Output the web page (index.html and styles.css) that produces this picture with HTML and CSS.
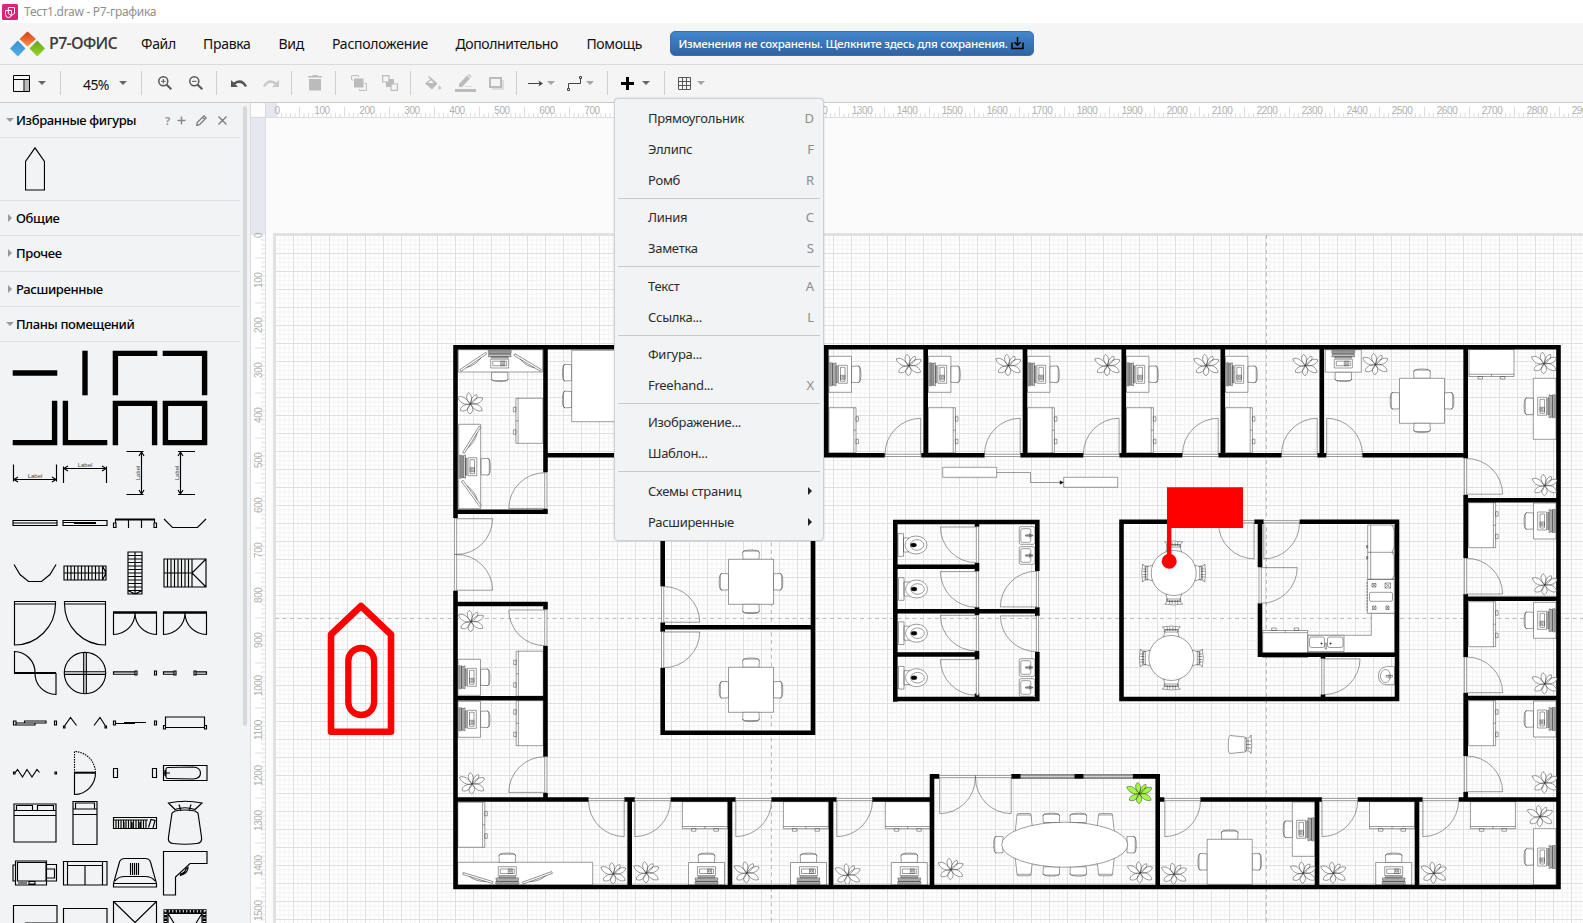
FILE: index.html
```html
<!DOCTYPE html>
<html lang="ru">
<head>
<meta charset="utf-8">
<title>Тест1.draw - Р7-графика</title>
<link rel="stylesheet" href="styles.css">
</head>
<body>
<div class="app">
  <header class="titlebar">
    <svg class="app-icon" width="16" height="16" viewBox="0 0 16 16"><rect width="16" height="16" rx="1.5" fill="#dc2279"/><path d="M6.3 3.5H12.500V9.500L9.500 11.500L6.300 9.500ZM3.500 6.500H9.500V10.500A3 3 0 0 1 3.500 10.500Z" fill="none" stroke="#fff"/></svg>
    <span class="title">Тест1.draw - Р7-графика</span>
  </header>
  <nav class="menubar">
    <svg class="logo" width="35" height="26" viewBox="0 0 35 26">
      <defs>
        <linearGradient id="lr" x2="0" y2="1"><stop stop-color="#d3400f"/><stop offset="1" stop-color="#ff8e4a"/></linearGradient>
        <linearGradient id="lb" x2="0" y2="1"><stop stop-color="#3a8fd0"/><stop offset="1" stop-color="#4fb0e6"/></linearGradient>
        <linearGradient id="lg" x2="0" y2="1"><stop stop-color="#6aa51c"/><stop offset="1" stop-color="#96d62c"/></linearGradient>
      </defs>
      <path d="M17.500.5L26 8L17.500 15.500L9.500 8Z" fill="url(#lr)"/><path d="M7.800 9.500L15.500 17.500L7.800 25.500L0 17.500Z" fill="url(#lb)"/><path d="M27.300 9.500L35 17.500L27.300 25.500L19.500 17.500Z" fill="url(#lg)"/>
    </svg>
    <span class="brand">Р7-ОФИС</span>
    <span class="mi m1">Файл</span><span class="mi m2">Правка</span><span class="mi m3">Вид</span><span class="mi m4">Расположение</span><span class="mi m5">Дополнительно</span><span class="mi m6">Помощь</span>
    <button class="save"><span>Изменения не сохранены. Щелкните здесь для сохранения.</span>
      <svg width="13" height="13" viewBox="0 0 13 13"><path d="M1 5.500V11.500H12V5.500M6.500 0V8M3.500 5.300L6.500 8.300L9.500 5.300" fill="none" stroke="#000" stroke-width="1.500"/></svg></button>
  </nav>
  <div class="toolbar">
    <div class="grp g1"><svg width="17" height="17" viewBox="0 0 17 17"><path d="M11.500 4.500H16V16H11.500Z" fill="#bbb"/><path d="M.5.500H16.500V16.500H.5ZM.5 4.500H16.500M11 4.500V16.500" fill="none" stroke="#000"/></svg><i class="caret"></i></div>
    <div class="grp g2"><span class="zoom">45%</span><i class="caret"></i></div>
    <div class="grp g3"><svg width="14" height="14" viewBox="0 0 14 14"><g fill="none" stroke="#555"><circle cx="5.300" cy="5.300" r="4.500" stroke-width="1.500"/><path d="M8.700 8.700L13.300 13.300" stroke-width="2"/><path d="M5.300 3V7.600M3 5.300H7.600"/></g></svg><svg width="14" height="14" viewBox="0 0 14 14"><g fill="none" stroke="#555"><circle cx="5.300" cy="5.300" r="4.500" stroke-width="1.500"/><path d="M8.700 8.700L13.300 13.300" stroke-width="2"/><path d="M3 5.300H7.600"/></g></svg></div>
    <div class="grp g4"><svg width="16" height="9" viewBox="0 0 16 9"><path d="M0 1V8H7L4.300 5.300Q10 1.500 14 8L16 7Q11-2.500 2.700 3.500Z" fill="#555"/></svg><svg width="16" height="9" viewBox="0 0 16 9"><path d="M16 1V8H9L11.700 5.300Q6 1.500 2 8L0 7Q5-2.500 13.300 3.500Z" fill="#c8c8c8"/></svg></div>
    <div class="grp g5"><svg width="14" height="16" viewBox="0 0 14 16"><path d="M0 1H4.500V0H9.500V1H14V2.500H0ZM1 4H13V15.500H1Z" fill="#bbb"/></svg></div>
    <div class="grp g6"><svg width="16" height="16" viewBox="0 0 16 16"><path d="M3 3.500H12.500V12.500H3Z" fill="#bbb"/><path d="M.6 5V.6H7.500V2M15.400 8.500V15.400H8.500V14M.6 5H2M13.500 8.500H15.400" fill="none" stroke="#bbb"/></svg><svg width="16" height="16" viewBox="0 0 16 16"><path d="M4 4H12V12H4Z" fill="#bbb"/><path d="M.6.600H7V7H.6ZM9 9H15.400V15.400H9Z" fill="#f5f5f5" stroke="#bbb" stroke-width="1.200"/></svg></div>
    <div class="grp g7"><svg width="17" height="15" viewBox="0 0 17 15"><path d="M4 0L12.500 7.500L7 13.500L0 7.500L5.500 3L3 1Z" fill="#bbb"/><path d="M3 7H9L6 4.300Z" fill="#f5f5f5"/><path d="M14.500 9Q18 13.500 14.500 13.500T14.500 9" fill="#ccc"/></svg><svg width="21" height="18" viewBox="0 0 21 18"><path d="M4 13V10L12 1.500L15 4.500L7 13ZM12.800.7L14 0L16.500 2.500L15.800 3.500Z" fill="#bbb"/><path d="M0 15H21V18H0Z" fill="#bbb"/><path d="M10 12.500H17" stroke="#ddd"/></svg><svg width="15" height="13" viewBox="0 0 15 13"><path d="M3 3H15V13H3Z" fill="#ddd"/><path d="M1 1H12V10H1Z" fill="#f5f5f5" stroke="#bbb" stroke-width="2"/></svg></div>
    <div class="grp g8"><svg width="15" height="7" viewBox="0 0 15 7"><path d="M0 3.500H12" stroke="#444"/><path d="M10.500 0.500L15 3.500L10.500 6.500L11.500 3.500Z" fill="#444"/></svg><i class="caret light"></i><svg class="conn" width="15" height="15" viewBox="0 0 15 15"><path d="M1.500 12V7.500H13.500V3M.5 12.500H2.500V14.500H.5ZM12.500.5H14.500V2.500H12.500Z" fill="none" stroke="#444"/></svg><i class="caret light"></i></div>
    <div class="grp g9"><svg width="13" height="13" viewBox="0 0 13 13"><path d="M6.500 0V13M0 6.500H13" stroke="#000" stroke-width="3"/></svg><i class="caret"></i></div>
    <div class="grp g10"><svg width="13" height="13" viewBox="0 0 13 13"><path d="M.5.500H12.500V12.500H.5ZM.5 4.500H12.500M.5 8.500H12.500M4.500.5V12.500M8.500.5V12.500" fill="none" stroke="#555"/></svg><i class="caret light"></i></div>
  </div>
  <main class="work">
    <aside class="sidebar">
      <h3 class="head fav"><i class="tri down"></i>Избранные фигуры
        <span class="acts"><b>?</b>
        <svg width="9" height="9" viewBox="0 0 9 9"><path d="M4.500.5V8.500M.5 4.500H8.500" stroke="#888" stroke-width="1.400"/></svg>
        <svg width="11" height="11" viewBox="0 0 11 11"><path d="M.6 10.400L1.300 7.500L8 .8L10.200 3L3.500 9.700ZM6.500 2.300L8.700 4.500" fill="none" stroke="#777" stroke-width="1.200"/></svg>
        <svg width="9" height="9" viewBox="0 0 9 9"><path d="M.5.500L8.500 8.500M8.500.5L.5 8.500" stroke="#777" stroke-width="1.200"/></svg></span>
      </h3>
      <div class="favbody"><svg width="20" height="44" viewBox="0 0 20 44"><path d="M.5 43V14.500L10 .8L19.500 14.500V43Z" fill="none" stroke="#000" stroke-width="1.200"/></svg></div>
      <h3 class="head"><i class="tri"></i>Общие</h3>
      <h3 class="head h36"><i class="tri"></i>Прочее</h3>
      <h3 class="head"><i class="tri"></i>Расширенные</h3>
      <h3 class="head"><i class="tri down"></i>Планы помещений</h3>
      <div class="tiles">
        <svg class="w" viewBox="-25 -25 50 50"><path d="M-22.300 0H22.300"/></svg>
        <svg class="w" viewBox="-25 -25 50 50"><path d="M0-22.300V22.300"/></svg>
        <svg class="w" viewBox="-25 -25 50 50"><path d="M-19.600 22.300V-19.600H22.300"/></svg>
        <svg class="w" viewBox="-25 -25 50 50"><path d="M-22.300-19.600H19.600V22.300"/></svg>

        <svg class="w" viewBox="-25 -25 50 50"><path d="M19.600-22.300V19.600H-22.300"/></svg>
        <svg class="w" viewBox="-25 -25 50 50"><path d="M-19.600-22.300V19.600H22.300"/></svg>
        <svg class="w" viewBox="-25 -25 50 50"><path d="M-19.600 22.300V-19.600H19.600V22.300"/></svg>
        <svg class="w" viewBox="-25 -25 50 50"><path d="M-19.600 19.600V-19.600H19.600V19.600Z"/></svg>

        <svg viewBox="-25 -25 50 50"><path d="M-21.500-8.500V8.500M21.500-8.500V8.500M-21 6.500H21M-17 4L-21 6.500L-17 9M17 4L21 6.500L17 9"/><text x="0" y="5">Label</text></svg>
        <svg viewBox="-25 -25 50 50"><path d="M-21.500-6.500V10M21.500-6.500V10M-21-4.500H21M-17-7L-21-4.500L-17-2M17-7L21-4.500L17-2"/><text x="0" y="-6">Label</text></svg>
        <svg viewBox="-25 -25 50 50"><path d="M-8.500-21.500H8.500M-8.500 21.500H8.500M6.500-21V21M4-17L6.500-21L9-17M4 17L6.500 21L9 17"/><text transform="translate(5.300 0) rotate(-90)">Label</text></svg>
        <svg viewBox="-25 -25 50 50"><path d="M-7-21.500H10M-7 21.500H10M-4.500-21V21M-7-17L-4.500-21L-2-17M-7 17L-4.500 21L-2 17"/><text transform="translate(-6 0) rotate(-90)">Label</text></svg>

        <svg viewBox="-25 -25 50 50"><path d="M-22-2.500H22V2.500H-22ZM-22 0H22"/></svg>
        <svg viewBox="-25 -25 50 50"><path d="M-22-2.500H22V2.500H-22ZM-22-.5H11M-11 .5H11"/></svg>
        <svg viewBox="-25 -25 50 50"><path d="M-21.500 4.500V0H-19V4.500ZM21.500 4.500V0H19V4.500ZM-19.500 0V-3.500H19.500V0M-6.500-3.500V5M6.500-3.500V5"/><path d="M-20-3.500H20" stroke-width="2"/></svg>
        <svg viewBox="-25 -25 50 50"><path d="M-21-4L-12.500 4.500H12.500L21-4"/></svg>

        <svg viewBox="-25 -25 50 50"><path d="M-21-8.500L-15 1.500L-6.500 8.500H6.500L15 1.500L21-8.500"/></svg>
        <svg viewBox="-25 -25 50 50"><path d="M-21-7H21V7H-21ZM-21 0H21M-17.500-7V7M-14-7V7M-10.500-7V7M-7-7V7M-3.500-7V7M0-7V7M3.500-7V7M7-7V7M10.500-7V7M14-7V7M17.500-7V7M17.500-7L21 0L17.500 7"/></svg>
        <svg viewBox="-25 -25 50 50"><g transform="rotate(90)"><path d="M-21-7H21V7H-21ZM-21 0H21M-17.500-7V7M-14-7V7M-10.500-7V7M-7-7V7M-3.500-7V7M0-7V7M3.500-7V7M7-7V7M10.500-7V7M14-7V7M17.500-7V7M17.500-7L21 0L17.500 7"/></g></svg>
        <svg viewBox="-25 -25 50 50"><path d="M-21-14H21V14H-21ZM-21 0H7M-17.500-14V14M-14-14V14M-10.500-14V14M-7-14V14M-3.500-14V14M0-14V14M3.500-14V14M7-14V14M21-14L7 0L21 14"/></svg>

        <svg viewBox="-25 -25 50 50"><path d="M-20.500-21.500H20.500V-19H-20.500ZM-20.500-19V22A41 41 0 0 0 20.500-19"/></svg>
        <svg viewBox="-25 -25 50 50"><path d="M20.500-21.500H-20.500V-19H20.500ZM20.500-19V22A41 41 0 0 1-20.500-19"/></svg>
        <svg viewBox="-25 -25 50 50"><path d="M-21.500-11V11.500A21.500 21.500 0 0 0 0-10A21.500 21.500 0 0 0 21.500 11.500V-11"/><path d="M-22-10.500H22" stroke-width="2.500"/></svg>
        <svg viewBox="-25 -25 50 50"><path d="M-21.500-11V11.500A21.500 21.500 0 0 0 0-10A21.500 21.500 0 0 0 21.500 11.500V-11"/><path d="M-22-10.500H22" stroke-width="2.500"/></svg>

        <svg viewBox="-25 -25 50 50"><path d="M-20.500 0V-21.500A21 21 0 0 1 0 0A21 21 0 0 0 21 21.500V0"/><path d="M-21 0H21" stroke-width="2"/></svg>
        <svg viewBox="-25 -25 50 50"><circle r="20.700"/><path d="M-20.500-1.300H20.500M-20.500 1.300H20.500M-1.300-20.500V20.500M1.300-20.500V20.500"/></svg>
        <svg viewBox="-25 -25 50 50"><path d="M-21.500-1.200H0V1.200H-21.500ZM0-2H2V2H0ZM19.500-2H21.500V2H19.500Z"/></svg>
        <svg viewBox="-25 -25 50 50"><path d="M-21.500-1.200H-11V1.200H-21.500ZM-11-2H-9V2H-11ZM21.500-1.200H11V1.200H21.500ZM11-2H9V2H11Z"/></svg>

        <svg viewBox="-25 -25 50 50"><path d="M-21.500-2H-19V2H-21.500ZM-10.500-2H11V0H-10.500ZM-19 0H0V2H-19ZM19.500-2H21.500V2H19.500Z"/></svg>
        <svg viewBox="-25 -25 50 50"><path d="M-21.500 3H-20V5H-21.500ZM-20.500 3L-14.500-5.500L-8.500 2.500M20 3H21.500V5H20ZM20.500 3L15-5.500L9 2.500"/></svg>
        <svg viewBox="-25 -25 50 50"><path d="M-21.500-2H-19.500V2H-21.500ZM-19.500 .5H0M-11-.5H11M19.500-2H21.500V2H19.500Z"/></svg>
        <svg viewBox="-25 -25 50 50"><path d="M-19.500-6H19.500V4.500H-19.500ZM-21.500 2.500H-19.500V6H-21.500ZM21.500 2.500H19.500V6H21.500Z"/></svg>

        <svg viewBox="-25 -25 50 50"><path d="M-21.500-1H-20V1H-21.500ZM-20 0L-17.500-3.500L-12.500 4L-8-3.500L-3 4L2-3.500L4.500-.5M20-1H21.500V1H20Z"/></svg>
        <svg viewBox="-25 -25 50 50"><path d="M-10.500 0V21.500A21.500 21.500 0 0 0 10.500 0"/><path d="M-10.500 0V-21.500A21.500 21.500 0 0 1 10.500 0" stroke-dasharray="1.500 1"/><path d="M-10.500-.3H10.500" stroke-width="2"/></svg>
        <svg viewBox="-25 -25 50 50"><path d="M-21.500-4.500H-17.500V4.500H-21.500ZM17.500-4.500H21.500V4.500H17.500Z"/></svg>
        <svg viewBox="-25 -25 50 50"><path d="M-21.500-7.500H22V7.500H-21.500ZM-19-4Q-19-5.500-17-5.500L8-6Q15.500-5.500 15.500 0T8 6L-17 5.500Q-19 5.500-19 4ZM-21 0H-15M-20-3V3"/></svg>

        <svg viewBox="-25 -25 50 50"><path d="M-21-19H21V19H-21ZM-21-12.500H21M-21-7.500H21M-18.500-13V-17.500H-2.500V-13M18.500-13V-17.500H2.500V-13"/></svg>
        <svg viewBox="-25 -25 50 50"><path d="M-12-21.500H12V21.500H-12ZM-12-14H12M-12-8.500H12M-9.500-14V-20H9.500V-14"/></svg>
        <svg viewBox="-25 -25 50 50"><path d="M-21.500-5.500H21.500V5.500H-21.500ZM-21.500-3H13M-19-3V5M-16.500-3V5M-14-3V5M-11.500-3V5M-9-3V5M-6.500-3V5M-4-3V5M-1.500-3V5M1-3V5M3.500-3V5M6-3V5M8.500-3V5M11-3V5M13.500 4.500L16-3.500L20-2.500L18 5M-11-1V5M-3-1V5M5-1V5"/></svg>
        <svg viewBox="-25 -25 50 50"><path d="M-16.500-20Q0-23.500 17-20L10-13.500Q0-17-10-13.500ZM-6-18.500L-4-12M6-18.500L4-12M-10-12Q0-14 10-12L13-10L16.500 14Q17.500 20 12 20.500Q0 22-12 20.500Q-17.500 20-16.500 14L-13-10Z"/></svg>

        <svg viewBox="-25 -25 50 50"><path transform="translate(0 3)" d="M-19.500-15H11.500V9H-19.500ZM-17.500-13.500H11V5H-17.500ZM-22-11H-19.500V5H-22ZM11.500-11.500H21.500V5H11.500M11.500-7H19.500V2H11.500M-17 7H-8M-6 5.500H0V8H-6Z"/></svg>
        <svg viewBox="-25 -25 50 50"><path transform="translate(0 3)" d="M-21.500-14.500H22V9H-21.500ZM-17.500-10.500H17.500V9H-17.500ZM-17.500-14V-10.500M17.500-14V-10.500M0-10.500V9"/></svg>
        <svg viewBox="-25 -25 50 50"><path transform="translate(0 3)" d="M-21.500 11V7.500L-15.500-14Q-14.500-17.500-10-17.500H10Q14.500-17.500 15.500-14L21.500 7.500V11ZM-21.500 7.500H21.500M-20 5Q-17 .5-10 .5H10Q17 .5 20 5M-4.500-13V-1M-2.500-13V-1M-.5-13V-1M1.500-13V-1M3.500-13V-1"/></svg>
        <svg viewBox="-25 -25 50 50"><path d="M-21.500-21.500H22V-9.500H5L-9.500 4V22H-21.500ZM-4.500 2.500Q3 0 3-5.500L1-4Q0 0-4.500 1Z"/></svg>

        <svg viewBox="-25 -25 50 50"><path d="M-21.500-17.500H22V20H-21.500ZM-10 0H22"/></svg>
        <svg viewBox="-25 -25 50 50"><path d="M-21.500-14.500H22V20H-21.500Z"/></svg>
        <svg viewBox="-25 -25 50 50"><path d="M-21.500-21.500H21.500V21.500H-21.500ZM-21.500-21.500L0-.5L21.500-21.500"/></svg>
        <svg viewBox="-25 -25 50 50"><path d="M-17-9.500L-8 5M17-9.500L8 5M-17-9.500H17M-17-9.500V20M17-9.500V20"/><path d="M-19.500 20V-11.700H19.500V20" stroke-width="4"/><path class="fringe" d="M-19.500 20V-11.700H19.500V20"/></svg>
      </div>
      <i class="thumb"></i>
    </aside>
    <section class="editor">
      <div class="corner"></div>
      <div class="hruler">
        <svg width="1317" height="14"><defs><pattern id="ht" patternUnits="userSpaceOnUse" x="11" width="45" height="14"><path d="M4.500 10V14M9 10V14M13.500 10V14M18 10V14M22.500 4V14M27 10V14M31.500 10V14M36 10V14M40.500 10V14M0 10V14" stroke="#dcdde4"/></pattern></defs><rect x="11" width="1306" height="14" fill="url(#ht)"/></svg>
        <div class="nums"><span>0</span><span>100</span><span>200</span><span>300</span><span>400</span><span>500</span><span>600</span><span>700</span><span></span><span></span><span></span><span></span><span>1200</span><span>1300</span><span>1400</span><span>1500</span><span>1600</span><span>1700</span><span>1800</span><span>1900</span><span>2000</span><span>2100</span><span>2200</span><span>2300</span><span>2400</span><span>2500</span><span>2600</span><span>2700</span><span>2800</span><span>2900</span></div>
      </div>
      <div class="vruler">
        <svg width="15" height="805"><defs><pattern id="vt" patternUnits="userSpaceOnUse" y="117.500" width="15" height="45"><path d="M10 4.500H15M10 9H15M10 13.500H15M10 18H15M4 22.500H15M10 27H15M10 31.500H15M10 36H15M10 40.500H15M10 0H15" stroke="#dcdde4"/></pattern></defs><rect y="118" width="15" height="687" fill="url(#vt)"/></svg>
        <div class="nums"><span>0</span><span>100</span><span>200</span><span>300</span><span>400</span><span>500</span><span>600</span><span>700</span><span>800</span><span>900</span><span>1000</span><span>1100</span><span>1200</span><span>1300</span><span>1400</span><span>1500</span></div>
      </div>
      <svg class="canvas" width="1317" height="805" viewBox="266 118 1317 805">
        <defs>
          <pattern id="grid" patternUnits="userSpaceOnUse" x="275" y="235" width="18" height="18">
            <path d="M5 0V18M9.500 0V18M14 0V18M0 5H18M0 9.500H18M0 14H18" stroke="#f3f3f3" fill="none"/>
            <path d="M.5 0V18M0 .5H18" stroke="#dfdfdf" fill="none"/>
          </pattern>
          <g id="door"><path class="f" d="M0 0H36V2.250H0Z"/><path d="M.3 2.250V38.250A36 36 0 0 0 36 2.250"/></g>
          <g id="plant">
            <path d="M0 0C-4.500-4-4.500-9-1.800-11.300C1.800-9.500 1.800-4 0 0M0 0C1-6 3.500-9 6.500-9.300C8-6 4-2 0 0M0 0C3-5 8-7.500 12.300-6C12.500-2 6 1 0 0M0 0C5-1.500 11.500 1.500 11.800 6.500C7.500 8.500 2 4 0 0M0 0C3.500 3 3 8-.3 10C-4.500 7.500-3 3 0 0M0 0C-1.500 5-5.500 8.500-9.800 6.500C-10.500 2.500-5 0 0 0M0 0C-5 1.500-11-1.500-12.500-6.800C-7.500-9-3-4.500 0 0"/>
          </g>
          <g id="chair"><path class="f" d="M0-8L6.500-8.300Q8.200-8 8.200-6.500V6.500Q8.200 8 6.500 8.300L0 8Z"/><path d="M6.500-8.300Q9.200-8.500 9.300 0T6.500 8.300"/></g>
          <g id="pc">
            <path class="f" d="M9.500-9H18.300V9H9.500ZM11.500-7H16V7H11.500ZM11.500 1H16V5H11.500ZM13 2H14.800V4H13Z"/>
            <path class="m" d="M.8-11.500H3.500V11.500H.8ZM3.500-10.500L7-11.500V11.500L3.500 10.500ZM7-8.500H8.300V8.500H7ZM5-11V11M2-11V11"/>
            <use href="#chair" x="22.600"/>
          </g>
          <g id="ws"><path class="f" d="M0-18H22.500V18H0Z"/><use href="#pc"/></g>
          <g id="cab"><path class="f" d="M0 0H27V45H0ZM24.800 0V45M24.800 22.500H27M27 9H29.500V13.500H27ZM27 31.500H29.500V36H27Z"/></g>
          <g id="table"><use href="#chair" transform="translate(22.500 0)"/><use href="#chair" transform="translate(-22.500 0) scale(-1 1)"/><use href="#chair" transform="translate(0 -22.500) rotate(-90)"/><path class="f" d="M-22.500-22.500H22.500V22.500H-22.500Z"/></g>
          <g id="fancy"><path class="f" d="M20-8L28-6V6L20 8ZM26-7Q30-6 31-9Q33 0 31 9Q30 6 26 7ZM27-4H31M27-1.500H31M27 1.500H31M27 4H31M28.500-7V7"/></g>
          <g id="round"><use href="#fancy"/><use href="#fancy" transform="rotate(90)"/><use href="#fancy" transform="rotate(180)"/><use href="#fancy" transform="rotate(270)"/><circle class="f" r="22.500"/></g>
          <g id="wc"><path class="f" d="M0-11.300H5.500V11.300H0ZM5.500-7H11V7H5.500Z"/><ellipse class="f" cx="18" rx="11" ry="9"/><ellipse cx="19" rx="6.800" ry="5.300"/><ellipse class="k" cx="15.500" rx="3" ry="2"/></g>
          <g id="sink"><rect class="f" width="15.500" height="17.600" rx="1.500"/><rect x="1.500" y="2" width="10" height="13.600" rx="1.500"/><path d="M6 8.800H14M10.500 6V11.500M6.500 8H13V9.600H6.500Z"/></g>
          <g id="board"><path class="f" d="M0-1H31V1H0ZM7 1Q15 4 24 1"/></g>
        </defs>
        <rect x="266" y="118" width="1317" height="805" fill="#fbfbfb"/>
        <rect x="274" y="234" width="1320" height="700" fill="#fff" stroke="#e2e2e2" stroke-width="2"/>
        <rect x="275" y="235" width="1308" height="688" fill="url(#grid)"/>
        <path d="M771.500 235V923M1266.500 235V923M275 618.500H1583" stroke="#bdbdbd" stroke-dasharray="4 3.500" fill="none"/>

        <g class="thin">
          <!-- desks and workplaces -->
          <path class="f" d="M458.300 349.700H542.700V372H458.300ZM458.700 424.300H480.700V508.700H458.700ZM457.700 862.300H592.700V885H457.700ZM1533.300 378.300H1556V439.300H1533.300ZM1292.300 802H1315V856.300H1292.300ZM1533.500 828.700H1556V885H1533.500Z"/>
          <use href="#board" transform="translate(460.500 370.500) rotate(-34)"/><use href="#board" transform="translate(541 370.500) scale(-1 1) rotate(-31)"/>
          <use href="#board" transform="translate(463.500 453) rotate(-58)"/><use href="#board" transform="translate(480.500 506) rotate(-126)"/>
          <use href="#board" transform="translate(463 873.500) rotate(17)"/><use href="#board" transform="translate(552 872.500) scale(-1 1) rotate(20)"/>
          <use href="#pc" transform="matrix(0 1 1 0 499.700 349.700)"/><use href="#pc" transform="translate(458.500 466.700)"/><use href="#pc" transform="matrix(0 -1 1 0 507.300 885)"/>
          <use href="#pc" transform="translate(1556 406.300) scale(-1 1)"/><use href="#pc" transform="translate(1315 829.300) scale(-1 1)"/><use href="#pc" transform="translate(1556 857) scale(-1 1)"/>
          <use href="#ws" x="829" y="374.300"/><use href="#ws" x="928.400" y="374.300"/><use href="#ws" x="1027.400" y="374.300"/><use href="#ws" x="1126.400" y="374.300"/><use href="#ws" x="1225.400" y="374.300"/>
          <use href="#ws" transform="matrix(0 1 1 0 1343.300 349.700)"/>
          <use href="#ws" transform="translate(1556 521) scale(-1 1)"/><use href="#ws" transform="translate(1556 620.300) scale(-1 1)"/><use href="#ws" transform="translate(1556 719) scale(-1 1)"/>
          <use href="#ws" transform="matrix(0 -1 1 0 1393.700 885)"/><use href="#ws" transform="matrix(0 -1 1 0 909.300 885)"/><use href="#ws" transform="matrix(0 -1 1 0 706.500 885)"/><use href="#ws" transform="matrix(0 -1 1 0 808.500 885)"/>
          <use href="#ws" x="458" y="677.300"/><use href="#ws" x="458" y="719.300"/>
          <!-- cabinets -->
          <use href="#cab" x="829" y="407.700"/><use href="#cab" x="928.400" y="407.700"/><use href="#cab" x="1027.400" y="407.700"/><use href="#cab" x="1126.400" y="407.700"/><use href="#cab" x="1225.400" y="407.700"/>
          <use href="#cab" x="1468.600" y="502.700"/><use href="#cab" x="1468.600" y="601.700"/><use href="#cab" x="1468.600" y="700.700"/><use href="#cab" x="457.800" y="802.300"/>
          <use href="#cab" transform="translate(542.900 398.300) scale(-1 1)"/><use href="#cab" transform="translate(543.200 651.200) scale(-1 1)"/><use href="#cab" transform="translate(543.200 700.700) scale(-1 1)"/>
          <use href="#cab" transform="matrix(0 1 1 0 682.400 801.700)"/><use href="#cab" transform="matrix(0 1 1 0 783.400 801.700)"/><use href="#cab" transform="matrix(0 1 1 0 885.300 801.700)"/><use href="#cab" transform="matrix(0 1 1 0 1369.500 801.700)"/><use href="#cab" transform="matrix(0 1 1 0 1470.400 801.700)"/><use href="#cab" transform="matrix(0 1 1 0 1469 349.500)"/>
          <!-- tables -->
          <use href="#chair" transform="translate(571.700 372.700) scale(-1 1)"/><use href="#chair" transform="translate(571.700 399.500) scale(-1 1)"/><path class="f" d="M571.700 350.300H680V421.700H571.700Z"/>
          <use href="#table" x="751" y="581.800"/><use href="#chair" transform="translate(751 604.300) rotate(90)"/>
          <use href="#table" x="751" y="689.800"/><use href="#chair" transform="translate(751 712.300) rotate(90)"/>
          <use href="#table" x="1422" y="400.800"/><use href="#chair" transform="translate(1422 423.300) rotate(90)"/>
          <use href="#table" x="1229.700" y="861.800"/>
          <g id="orow"><path class="f" d="M1015 834L1017 815Q1017 813.500 1019 813.500H1029Q1031 813.500 1031 815L1033 834ZM1017 815H1031M1096.500 834L1098.500 815Q1098.500 813.500 1100.500 813.500H1110.500Q1112.500 813.500 1112.500 815L1114.500 834ZM1098.500 815H1112.500"/><use href="#chair" transform="translate(1051.300 822.500) rotate(-90)"/><use href="#chair" transform="translate(1078.300 822.500) rotate(-90)"/></g>
          <use href="#orow" transform="matrix(1 0 0 -1 0 1689.300)"/>
          <use href="#chair" transform="translate(1003 844.700) scale(-1 1)"/><use href="#chair" transform="translate(1127 844.700)"/>
          <ellipse class="f" cx="1064.700" cy="844.700" rx="63" ry="22.500"/>
          <use href="#round" x="1173.700" y="573"/><use href="#round" x="1171.300" y="658"/>
          <path class="f" d="M1230 735.500L1245 737L1246.500 739V750L1245 752L1230 753.500Q1228 753 1228.300 744.500T1230 735.500ZM1245 738Q1250 739 1251 735Q1252.500 744.500 1251 753.500Q1250 750 1245 751ZM1246 741H1251M1246 744.500H1251M1246 748H1251M1248 739V750"/>
          <!-- kitchen and bathrooms -->
          <path class="f" d="M1371.300 613H1394.500V653H1263V635.300H1371.300Z"/>
          <use href="#cab" transform="matrix(0 -1 1 0 1262.700 657.500)"/>
          <path class="f" d="M1308 635.300H1344V651.500H1308ZM1367.700 525H1394.300V579.300H1367.700ZM1370.700 525V579.300M1367.700 552.300H1394.300M1392 525L1394.300 530V547L1392 552.300L1394.300 556V575L1392 579.300M1366.500 545.500H1367.700V548H1366.500ZM1366.500 556.500H1367.700V559H1366.500ZM1367.300 579.300H1394.300V613.300H1367.300Z"/>
          <path d="M1367 582V612" stroke-dasharray="2 1"/><rect x="1369.500" y="592.300" width="23" height="9" rx="1.500"/>
          <path d="M1372 583.500H1376V587H1372ZM1372 583.500L1376 587M1376 583.500L1372 587M1385 583H1390.500V588H1385ZM1385 583L1390.500 588M1390.500 583L1385 588M1372.500 606H1376V609.500H1372.500ZM1372.500 606L1376 609.500M1376 606L1372.500 609.500M1386 606H1389V609.500H1386ZM1386 606L1389 609.500M1389 606L1386 609.500"/>
          <rect x="1309.500" y="637" width="15" height="10.500" rx="2"/><rect x="1327.500" y="637" width="15.500" height="10.500" rx="2"/><path d="M1325 643H1326.500V649H1325Z"/><circle class="k" cx="1321.500" cy="643.500" r=".7"/><circle class="k" cx="1330.500" cy="643.500" r=".7"/>
          <path class="f" d="M1394.500 666.700H1386Q1378.500 668 1378.500 675.800T1386 684.700H1394.500Z"/><ellipse cx="1385.500" cy="676" rx="5" ry="6.500"/><path d="M1386 675.500H1392.500V677H1386ZM1389 674V679"/>
          <use href="#wc" x="898" y="545"/><use href="#wc" x="898.500" y="589"/><use href="#wc" x="898.500" y="633.200"/><use href="#wc" x="898.500" y="677.700"/>
          <use href="#sink" x="1019.300" y="526.700"/><use href="#sink" x="1019.300" y="546.700"/><use href="#sink" x="1019.300" y="658.700"/><use href="#sink" x="1019.300" y="678.700"/>
          <!-- connector -->
          <path class="f" d="M942.700 467.300H996.700V477.300H942.700ZM1063.700 477.300H1117.700V487.300H1063.700Z"/><path d="M996.700 472.500H1030.500V482.500H1062"/><path class="k" d="M1060 480.700L1063.500 482.500L1060 484.300Z"/>
        </g>

        <path class="wall" d="M453.300 347.200H1560.700M455.500 345V518M455.500 590.700V889.200M453.300 887H1560.700M1558.500 345V889M545.500 345V472.300M547 455.300H884.700M826.300 345V457.500M453.300 511.700H547.700M545.500 509V513M455 604H547.700M545.500 602V609.500M453.300 698.300H547M545.500 646V756.700M545.500 793V800M453.300 799.500H588.700M624.300 799.500H635M670.700 799.500H735.700M771.300 799.500H836.700M872 799.500H932M629.700 800V887M730 800V887M831 800V887M932 774.200V887M930 776.400H939.300M1011.300 776.400H1020.700M1074.300 776.400H1083.700M1133 776.400H1160M1157.700 776V887M1158 799.500H1164.300M1200.300 799.500H1322M1357.700 799.500H1422.700M1458.700 799.500H1558M1317 800V887M1417 800V887M925.700 347V457.500M1025 347V457.500M1123.800 347V457.500M1222.800 347V457.500M1321.800 347V457.500M1465.700 347V458.300M921.300 455.300H984.700M1020.300 455.300H1083.300M1119.300 455.300H1182.300M1218.300 455.300H1281.700M1317.300 455.300H1326.300M1362.300 455.300H1467M1465.700 495V558M1465.700 594V657M1465.700 693V756M1465.700 792V800M1465 500.200H1558M1465 598.800H1558M1465 698H1558M662.700 522V586.300M662.700 622.500V631.800M662.700 668V735M813 522V735M662 627.200H813M662 732.800H813M662 522H813M895.300 520V701.700M893 522H1039.600M1037.300 520V571M1037.300 607.300V616M1037.300 652V701.200M895 699H1039M977 522V526.700M977 563V571.300M977 607.300V615M977 651V659.300M977 693.500V699M895 566.700H979M895 611.300H1038M895 654.500H979M1121.500 519.600V701.200M1119.300 521.800H1208M1254.300 521.800H1263.700M1299.700 521.800H1399.200M1397 521V701.200M1260 521V567.300M1260 603.200V656.900M1258 654.700H1397M1121 699H1397M1323 655V658.700M1323 694.500V699"/>

        <g class="thin">
          <path class="win" d="M1020.700 774.500H1074.300V778.500H1020.700ZM1083.700 774.500H1133V778.500H1083.700Z"/><path class="f" d="M1020.700 775.800H1074.300V777.300H1020.700ZM1083.700 775.800H1133V777.300H1083.700Z"/>
          <use href="#door" transform="matrix(0 -1 -1 0 547 508.700)"/><use href="#door" transform="matrix(0 1 -1 0 547 609.700)"/><use href="#door" transform="matrix(0 -1 -1 0 547 792.700)"/>
          <use href="#door" transform="matrix(0 1 1 0 454.400 518.400)"/><use href="#door" transform="matrix(0 -1 1 0 454.400 590.500)"/>
          <use href="#door" transform="matrix(-1 0 0 -1 921 456.500)"/><use href="#door" transform="matrix(-1 0 0 -1 1020.500 456.500)"/><use href="#door" transform="matrix(-1 0 0 -1 1119.400 456.500)"/><use href="#door" transform="matrix(-1 0 0 -1 1218.500 456.500)"/><use href="#door" transform="matrix(-1 0 0 -1 1317.500 456.500)"/><use href="#door" transform="matrix(1 0 0 -1 1326.400 456.500)"/>
          <use href="#door" transform="matrix(0 -1 1 0 661.500 622.500)"/><use href="#door" transform="matrix(0 1 1 0 661.500 631.700)"/>
          <use href="#door" transform="matrix(-1 0 0 1 624.500 798.400)"/><use href="#door" x="634.500" y="798.400"/><use href="#door" x="735.500" y="798.400"/><use href="#door" x="836.500" y="798.400"/><use href="#door" x="1164.500" y="798.400"/><use href="#door" x="1321.700" y="798.400"/><use href="#door" x="1422.600" y="798.400"/>
          <use href="#door" x="939.400" y="775.400"/><use href="#door" transform="matrix(-1 0 0 1 1011.500 775.400)"/>
          <use href="#door" transform="matrix(0 -1 1 0 1464.400 494.500)"/><use href="#door" transform="matrix(0 -1 1 0 1464.400 594.300)"/><use href="#door" transform="matrix(0 -1 1 0 1464.400 693)"/><use href="#door" transform="matrix(0 -1 1 0 1464.400 792)"/>
          <use href="#door" transform="matrix(0 1 -1 0 978.600 526.700)"/><use href="#door" transform="matrix(0 1 -1 0 978.600 571.300)"/><use href="#door" transform="matrix(0 1 -1 0 978.600 615)"/><use href="#door" transform="matrix(0 1 -1 0 978.600 659.300)"/>
          <use href="#door" transform="matrix(0 -1 -1 0 1038.600 607.200)"/><use href="#door" transform="matrix(0 1 -1 0 1038.600 615.600)"/>
          <use href="#door" transform="matrix(-1 0 0 1 1254.400 520.600)"/><use href="#door" x="1263.500" y="520.600"/><use href="#door" transform="matrix(0 1 1 0 1259 567.300)"/><use href="#door" transform="matrix(0 1 1 0 1321.800 658.600)"/>
        </g>
        <g class="plants">
          <use href="#plant" x="908.700" y="365.700"/><use href="#plant" x="1008.300" y="365.700"/><use href="#plant" x="1107.300" y="365.700"/><use href="#plant" x="1206.300" y="365.700"/><use href="#plant" x="1305.300" y="365.700"/><use href="#plant" x="1375.300" y="364.700"/><use href="#plant" x="1544" y="363.700"/><use href="#plant" x="1544.700" y="485.700"/><use href="#plant" x="1544.700" y="585"/><use href="#plant" x="1544.700" y="684"/><use href="#plant" x="1544.700" y="783"/><use href="#plant" x="1540" y="816.700"/><use href="#plant" x="1303" y="873.300"/><use href="#plant" x="1333.300" y="873.300"/><use href="#plant" x="1433.700" y="873.300"/><use href="#plant" x="847.700" y="875"/><use href="#plant" x="950.700" y="869.700"/><use href="#plant" x="1140" y="873"/><use href="#plant" x="1174" y="874.300"/><use href="#plant" x="613.300" y="874"/><use href="#plant" x="646.300" y="873"/><use href="#plant" x="746.700" y="873"/><use href="#plant" x="472" y="784"/><use href="#plant" x="471" y="621.700"/><use href="#plant" x="470.300" y="404"/>
          <use class="green" href="#plant" x="1139.300" y="793.700"/>
        </g>
        <g fill="#f00"><path d="M1167 487.300H1243V528H1171.400V556H1167Z"/><circle cx="1169.200" cy="561.300" r="7.500"/></g>
        <path d="M361 606L391 634.500V731.800H331V634.500Z" fill="none" stroke="#f00" stroke-width="6.600" stroke-linejoin="round"/>
        <rect x="348.300" y="648" width="25.800" height="67" rx="12.900" fill="none" stroke="#f00" stroke-width="6.300"/>
      </svg>
    </section>
  </main>
  <div class="popup">
    <div class="row"><span>Прямоугольник</span><kbd>D</kbd></div>
    <div class="row"><span>Эллипс</span><kbd>F</kbd></div>
    <div class="row"><span>Ромб</span><kbd>R</kbd></div>
    <hr>
    <div class="row"><span>Линия</span><kbd>C</kbd></div>
    <div class="row"><span>Заметка</span><kbd>S</kbd></div>
    <hr class="tall">
    <div class="row"><span>Текст</span><kbd>A</kbd></div>
    <div class="row"><span>Ссылка...</span><kbd>L</kbd></div>
    <hr>
    <div class="row"><span>Фигура...</span></div>
    <div class="row"><span>Freehand...</span><kbd>X</kbd></div>
    <hr>
    <div class="row"><span>Изображение...</span></div>
    <div class="row"><span>Шаблон...</span></div>
    <hr class="tall">
    <div class="row"><span>Схемы страниц</span><i class="sub"></i></div>
    <div class="row"><span>Расширенные</span><i class="sub"></i></div>
  </div>
</div>
</body>
</html>
```
FILE: styles.css
```css
* { box-sizing: border-box; }
body { margin: 0; font-family: "Noto Sans", "Open Sans", sans-serif; color: #111; overflow: hidden; }
svg { display: block; flex: none; }
.app { width: 1583px; height: 923px; display: flex; flex-direction: column; position: relative; overflow: hidden; background: #f5f5f5; }
.titlebar { height: 23px; background: #fff; display: flex; align-items: center; padding-left: 2px; gap: 6px; flex: none; }
.title { font-size: 12px; color: #8f8f8f; letter-spacing: -.3px; white-space: nowrap; }
.menubar { height: 42px; display: flex; align-items: center; border-bottom: 1px solid #d8dadd; flex: none; padding-left: 10px; white-space: nowrap; }
.brand { width: 88px; margin-left: 4px; padding-bottom: 1px; font: 600 16px "Open Sans", sans-serif; letter-spacing: -.7px; color: #3c3c3c; }
.mi { font-size: 14px; letter-spacing: -.3px; flex: none; }
.m1 { width: 62px; margin-left: 4px; }
.m2 { width: 75.5px; }
.m3 { width: 53.5px; }
.m4 { width: 123.5px; letter-spacing: -.25px; }
.m5 { width: 131px; letter-spacing: -.4px; }
.m6 { width: 83px; letter-spacing: -.4px; }
.save { margin: 0; height: 25px; width: 364px; padding: 0 9px 0 8px; border: 1px solid #3a6fae; border-radius: 5px; background: linear-gradient(#4387d0, #30639f); color: #fff; font: 500 11.5px "Noto Sans", sans-serif; display: flex; align-items: center; justify-content: space-between; white-space: nowrap; letter-spacing: -.24px; }
.toolbar { height: 38px; border-bottom: 1px solid #c9cbce; display: flex; flex: none; }
.grp { height: 36px; display: flex; align-items: center; background: linear-gradient(#cfcfcf, #cfcfcf) right 6px / 1px 24px no-repeat; flex: none; }
.caret { border: 4px solid transparent; border-top-color: #666; border-bottom: 0; width: 8px; flex: none; }
.caret.light { border-top-color: #a5a5a5; }
.g1 { width: 61px; padding-left: 13px; gap: 8px; }
.g2 { width: 81px; padding-left: 22px; gap: 10px; }
.g3 { width: 75px; padding-left: 16px; gap: 17px; }
.g4 { width: 75px; padding-left: 14px; gap: 16px; }
.g5 { width: 44px; padding-left: 16px; }
.g6 { width: 75px; padding-left: 15px; gap: 15px; }
.g7 { width: 106px; padding-left: 14px; gap: 13px; }
.g8 { width: 91px; padding-left: 11px; gap: 4px; }
.conn { margin-left: 8px; }
.g9 { width: 57px; padding-left: 13px; gap: 8px; }
.g10 { padding-left: 13px; gap: 6px; background: none; }
.zoom { font-size: 14px; letter-spacing: -.6px; width: 26px; padding-top: 3px; }
.work { display: flex; height: 820px; flex: none; }
.sidebar { width: 251px; background: #f1f3f4; border-right: 1px solid #d9dadd; position: relative; overflow: hidden; flex: none; }
.head { margin: 0; width: 240px; height: 35px; display: flex; align-items: center; border-bottom: 1px solid #e0e2e4; font-size: 13px; font-weight: 500; letter-spacing: -.36px; white-space: nowrap; color: #000; }
.head.h36 { height: 36px; padding-bottom: 1px; }
.tri { width: 10px; height: 8px; margin-right: 6px; display: flex; justify-content: flex-end; }
.tri::after { content: ""; border: 4px solid transparent; border-left: 4px solid #999; border-right: 0; margin-right: -2px; }
.tri.down::after { border: 4px solid transparent; border-top: 4px solid #999; border-bottom: 0; height: 4px; margin: 2px -4px 0 0; }
.acts { margin-left: auto; display: flex; align-items: center; margin-right: 13px; }
.acts b { font-size: 11px; color: #999; margin-right: 7px; }
.acts svg:nth-of-type(2) { margin: 0 11px 0 10px; }
.favbody { height: 63px; border-bottom: 1px solid #e0e2e4; width: 240px; padding: 9px 0 0 25px; }
.tiles { display: grid; grid-template-columns: repeat(4, 50px); grid-auto-rows: 50px; padding: 6px 0 0 10px; }
.tiles svg { width: 50px; height: 50px; fill: none; stroke: #000; stroke-width: 1.15; }
.tiles svg.w { stroke-width: 5.4; }
.tiles text { font: 6px "Liberation Sans", sans-serif; text-anchor: middle; fill: #444; stroke: none; }
.fringe { stroke: #f1f3f4; stroke-width: 2.5; stroke-dasharray: 1 2.5; }
.thumb { position: absolute; right: 3px; top: 3px; width: 4px; height: 620px; border-radius: 2px; background: #d6d8db; }
.editor { display: grid; grid-template-columns: 15px 1317px; grid-template-rows: 15px 805px; flex: 1; background: #fff; min-width: 0; }
.corner { background: #fcfcfc; border-right: 1px solid #d9dadd; border-bottom: 1px solid #d9dadd; }
.hruler { border-bottom: 1px solid #dcdde2; background: linear-gradient(#e6e8ef, #e6e8ef) left / 11px 100% no-repeat #fff; display: grid; overflow: hidden; }
.hruler > *, .vruler > * { grid-area: 1 / 1; }
.nums { display: flex; font: 10px "Liberation Sans", sans-serif; letter-spacing: -.4px; color: #b0b0b0; }
.hruler .nums { margin-left: -11.5px; align-items: flex-start; line-height: 16px; }
.nums span { width: 45px; flex: none; text-align: center; }
.vruler { border-right: 1px solid #dcdde2; background: linear-gradient(#e6e8ef, #e6e8ef) top / 100% 117px no-repeat #fff; display: grid; overflow: hidden; height: 805px; }
.vruler .nums { flex-direction: column; padding-top: 95px; }
.vruler .nums span { height: 45px; width: 15px; writing-mode: vertical-rl; transform: rotate(180deg); line-height: 15px; }
.thin { fill: none; stroke: #3a3a3a; stroke-width: .5; }
.f { fill: #fff; }
.m { fill: #cfcfcf; }
.k { fill: #000; }
.win { fill: #b5b5b5; }
.wall { fill: none; stroke: #000; stroke-width: 4.6; }
.plants { fill: #fff; stroke: #333; stroke-width: .5; }
.green { fill: #a6f94a; }
.popup { position: absolute; left: 614px; top: 98px; width: 210px; height: 443px; background: #f1f3f4; border: 1px solid #cfd0d2; border-radius: 4px; padding: 4px 3px; box-shadow: 0 0 2px rgba(0,0,0,.15); display: flex; flex-direction: column; }
.row { height: 31px; flex: none; display: flex; align-items: center; justify-content: space-between; padding: 0 6px 2px 30px; font-size: 13px; letter-spacing: -.28px; color: #2c2c2c; }
.row kbd { font: inherit; color: #8c8c8c; letter-spacing: 0; }
.popup hr { width: 202px; height: 6px; margin: 0; border: 0; background: linear-gradient(#c6c8ca, #c6c8ca) 0 2px / 100% 1px no-repeat; flex: none; }
.popup hr.tall { height: 7px; }
.sub { border: 4px solid transparent; border-left-color: #222; border-right: 0; margin-right: 2px; }
```
